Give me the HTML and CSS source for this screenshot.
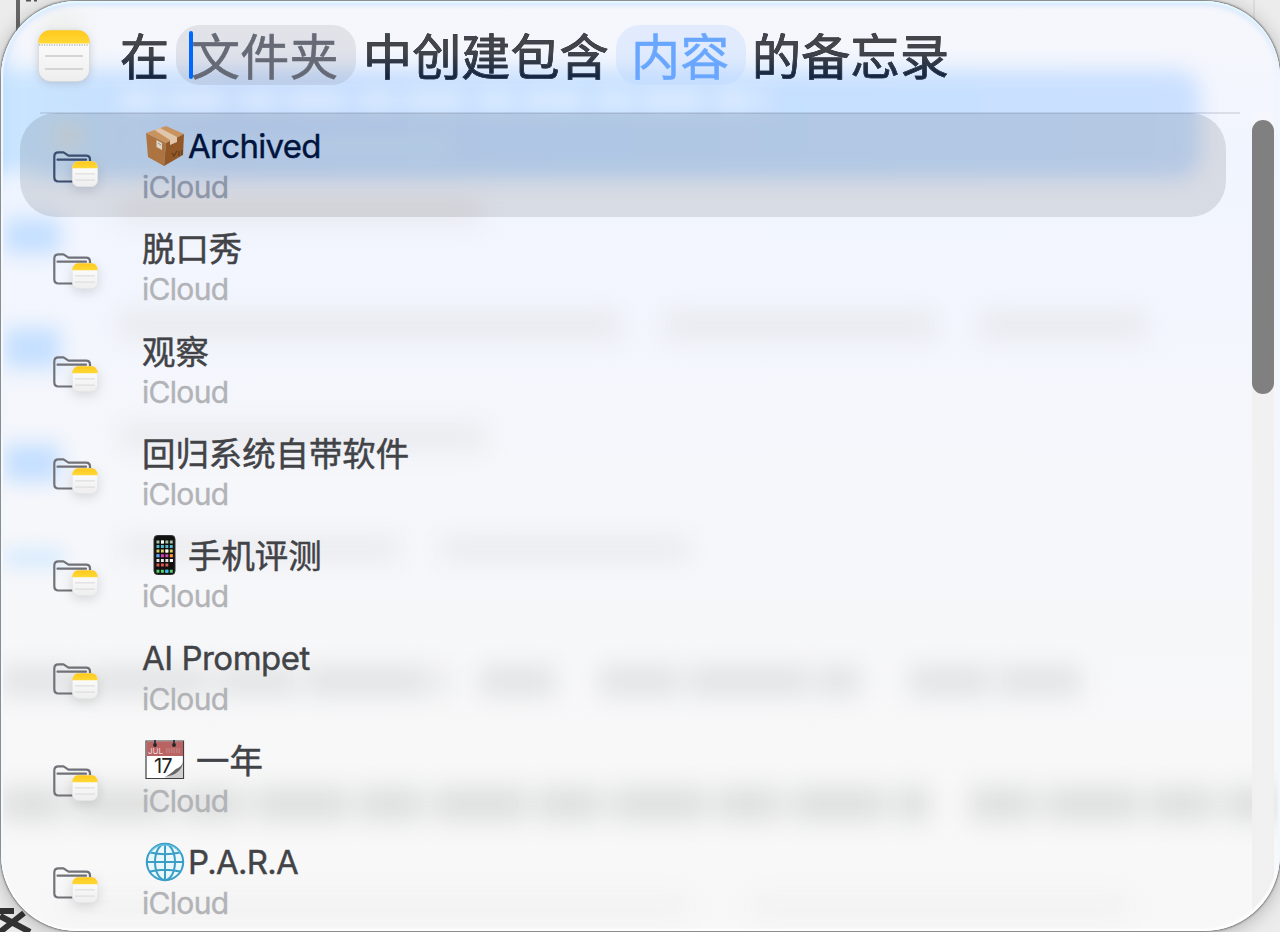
FILE: index.html
```html
<!DOCTYPE html>
<html lang="zh-CN">
<head>
<meta charset="utf-8">
<title>备忘录</title>
<link rel="stylesheet" href="styles.css">
</head>
<body>
<svg class="desktop" viewBox="0 0 1280 932" aria-hidden="true">
  <rect width="1280" height="932" fill="#ececec"/>
  <path d="M1254 0V40M18 0V30" stroke="#d0d0d0"/>
  <path d="M18 0V40" stroke="#666" stroke-width="4"/>
  <path d="M26 0h5M34 0h3" stroke="#555" stroke-width="3"/>
  <path d="M0 911H14M0 932L24 913M0 916L30 932" stroke="#333" stroke-width="6"/>
</svg>
<main class="panel">
  <svg class="backdrop" viewBox="0 0 1280 932" aria-hidden="true">
    <defs>
      <filter id="b1" x="-30%" y="-60%" width="160%" height="220%" color-interpolation-filters="sRGB"><feGaussianBlur stdDeviation="10"/></filter>
      <filter id="b2" x="-40%" y="-80%" width="180%" height="260%" color-interpolation-filters="sRGB"><feGaussianBlur stdDeviation="12"/></filter>
      <linearGradient id="band"><stop offset="0" stop-color="#cbe7ff"/><stop offset=".2" stop-color="#c3dafd"/><stop offset=".5" stop-color="#c4dfff"/><stop offset="1" stop-color="#cbe0ff"/></linearGradient>
    </defs>
    <g filter="url(#b1)">
      <rect x="-20" y="70" width="1220" height="108" rx="24" fill="url(#band)"/>
      <path d="M-10 8V180" stroke="#b9dcff" stroke-width="26"/>
      <ellipse cx="18" cy="186" rx="26" ry="16" fill="#eef4ff"/>
      <circle cx="68" cy="137" r="13" fill="#dadfe0"/>
      <path d="M120 100H770" stroke="#e2efff" stroke-width="16" stroke-dasharray="38 9 60 12"/>
      <path d="M130 147H450" stroke="#cbe5ff" stroke-width="14"/>
      <ellipse cx="62" cy="25" rx="22" ry="14" fill="#eeefed"/>
    </g>
    <g filter="url(#b1)" fill="#c4dfff">
      <rect x="4" y="218" width="56" height="36"/>
      <rect x="4" y="328" width="56" height="40"/>
      <rect x="4" y="444" width="56" height="38"/>
      <rect x="4" y="550" width="60" height="16" fill="#d0e8ff"/>
    </g>
    <g filter="url(#b2)" fill="none">
      <path d="M120 212H480" stroke="#e6e8ec" stroke-width="20"/>
      <path d="M120 325H620M665 325H935M980 325H1145" stroke="#e6e8ec" stroke-width="24"/>
      <path d="M120 437H485" stroke="#e9eaee" stroke-width="24"/>
      <path d="M120 549H400M440 549H690" stroke="#eaebee" stroke-width="24"/>
      <path d="M0 681H445M480 681H555M600 681H860M910 681H1080" stroke="#e2e3e4" stroke-width="30" stroke-dasharray="80 9 120 8"/>
      <path d="M0 804H930M970 804H1280" stroke="#dedfdf" stroke-width="34" stroke-dasharray="65 10 95 9"/>
      <path d="M60 907H690M750 907H1130" stroke="#f1f1f1" stroke-width="22"/>
    </g>
  </svg>

  <header class="query">
    <svg class="app-icon" viewBox="0 0 56 56" aria-hidden="true">
      <defs>
        <linearGradient id="paper" x2="0" y2="1"><stop offset="0" stop-color="#fff"/><stop offset="1" stop-color="#eeeeef"/></linearGradient>
        <linearGradient id="yellow" x2="0" y2="1"><stop offset="0" stop-color="#ffc91d"/><stop offset="1" stop-color="#ffd836"/></linearGradient>
        <symbol id="note" viewBox="0 0 26 26">
          <rect x=".3" y=".3" width="25.4" height="25.4" rx="6.4" fill="url(#paper)" stroke="#dedfe1" stroke-width=".6"/>
          <path d="M.3 7.3C.3 3 3 .3 7 .3H19C23 .3 25.7 3 25.7 7.3Z" fill="url(#yellow)"/>
          <path d="M3.5 12.8H22.5M3.5 19.2H22.5" stroke="#dedee0" stroke-width="1.3" stroke-linecap="round"/>
        </symbol>
        <symbol id="folder" viewBox="0 0 48 40">
          <path d="M20 32.5H6.5Q2.3 32.5 2.3 28.3V7.5Q2.3 3.3 6.5 3.3H11.5L16.5 6.600H34Q38 6.600 38 10.600V13M5.500 10.700H34" fill="none" stroke="currentColor" stroke-width="2.2" stroke-linecap="round" stroke-linejoin="round"/>
        </symbol>
      </defs>
      <rect x="2.3" y="2.3" width="51.4" height="51.4" rx="12.5" fill="url(#paper)" stroke="#c9ccd2" stroke-width=".7"/>
      <path d="M2.3 15.5C2.3 7 7 2.3 15 2.3H41C49 2.3 53.7 7 53.7 15.5Z" fill="url(#yellow)"/>
      <path d="M3 17H53" stroke="#b7b7b8" stroke-width="1.3" stroke-dasharray="1.2 1.3"/>
      <path d="M9 28H47M9 41H47" stroke="#d5d5d6" stroke-width="1.8"/>
    </svg>
    <div class="sentence">
      <span class="word first">在</span>
      <span class="token active"><span class="glyphs">文件夹</span><i class="caret"></i></span>
      <span class="word mid">中创建包含</span>
      <span class="token blue"><span class="glyphs">内容</span></span>
      <span class="word last">的备忘录</span>
    </div>
  </header>

  <ul class="results">
    <li class="row selected">
      <span class="icon"><svg class="folder"><use href="#folder"/></svg><svg class="note"><use href="#note"/></svg></span>
      <div class="text"><div class="title latin">
        <svg class="emoji" viewBox="0 0 40 42" aria-hidden="true">
          <path d="M1 8L21 1L39 9L21 18Z" fill="#c9935f"/><path d="M1 8L21 18L19 41L3 32Z" fill="#ad7442"/><path d="M21 18L39 9L38 30L19 41Z" fill="#925827"/>
          <path d="M9.5 5L15 3L32 12V17L25 20V15Z" fill="#e0c6ab"/><path d="M11.5 15L17 18V25L11.5 22Z" fill="#dcd5c8"/><path d="M13 18l3 2" stroke="#9a9288"/>
          <path d="M27 28l2 3 3-5M34 26v5M37 25v5" stroke="#68401c" stroke-width="1.3" fill="none"/>
        </svg><span class="name archived">Archived</span></div><div class="account">iCloud</div></div>
    </li>
    <li class="row">
      <span class="icon"><svg class="folder"><use href="#folder"/></svg><svg class="note"><use href="#note"/></svg></span>
      <div class="text"><div class="title"><span class="name">脱口秀</span></div><div class="account">iCloud</div></div>
    </li>
    <li class="row">
      <span class="icon"><svg class="folder"><use href="#folder"/></svg><svg class="note"><use href="#note"/></svg></span>
      <div class="text"><div class="title"><span class="name">观察</span></div><div class="account">iCloud</div></div>
    </li>
    <li class="row">
      <span class="icon"><svg class="folder"><use href="#folder"/></svg><svg class="note"><use href="#note"/></svg></span>
      <div class="text"><div class="title"><span class="name">回归系统自带软件</span></div><div class="account">iCloud</div></div>
    </li>
    <li class="row">
      <span class="icon"><svg class="folder"><use href="#folder"/></svg><svg class="note"><use href="#note"/></svg></span>
      <div class="text"><div class="title">
        <svg class="emoji" viewBox="0 0 40 42" aria-hidden="true">
          <rect x="9" y="1.5" width="21" height="39" rx="3.5" fill="#111" stroke="#343434"/>
          <g stroke-width="2.9" fill="none" stroke-dasharray="2.9 1.55">
            <path d="M11.5 8H28" stroke="#a8c6a4"/><path d="M11.5 12.5H28" stroke="#56bccd"/><path d="M11.5 17H28" stroke="#ddd164"/><path d="M11.5 21.7H28" stroke="#d743b2"/><path d="M11.5 26.5H28" stroke="#e8e8e8"/><path d="M11.5 31H24" stroke="#db594e"/><path d="M11.5 37.3H28" stroke="#50d672"/>
          </g>
          <path d="M16 8h2.900M24.900 26.500h2.900M20.400 17h2.900" stroke="#fff" stroke-width="2.9"/><path d="M11.500 21.700h2.900M20.400 37.300h2.900" stroke="#39b8ff" stroke-width="2.9"/><path d="M24.900 21.700h2.900" stroke="#ff9f12" stroke-width="2.9"/>
        </svg><span class="name">手机评测</span></div><div class="account">iCloud</div></div>
    </li>
    <li class="row">
      <span class="icon"><svg class="folder"><use href="#folder"/></svg><svg class="note"><use href="#note"/></svg></span>
      <div class="text"><div class="title latin"><span class="name prompet">AI Prompet</span></div><div class="account">iCloud</div></div>
    </li>
    <li class="row">
      <span class="icon"><svg class="folder"><use href="#folder"/></svg><svg class="note"><use href="#note"/></svg></span>
      <div class="text"><div class="title">
        <svg class="emoji" viewBox="0 0 40 42" aria-hidden="true">
          <path d="M1 3H38.5V40.5H1Z" fill="#fff" stroke="#3f3f3f" stroke-width="1.2"/><path d="M1.6 3.6H38V18H1.6Z" fill="#b96363"/>
          <path d="M10 7V2M29 7V2" stroke="#353f48" stroke-width="2"/><circle cx="10" cy="7" r="1.9" fill="#242424"/><circle cx="29" cy="7" r="1.9" fill="#242424"/>
          <path d="M21 12.5H36" stroke="#c27c7c" stroke-width="5" stroke-dasharray="1.5 1"/>
          <text x="3" y="16" class="month">JUL</text>
          <path d="M19 40C30 36 37 31 38 22V40Z" fill="#cfcfcf"/><path d="M20 39C29 34 29 32 31 31C36 29 38 26 38 23C38 31 32 37 20 39Z" fill="#666"/>
          <text x="9" y="35" class="day">17</text>
        </svg><span class="name year">一年</span></div><div class="account">iCloud</div></div>
    </li>
    <li class="row">
      <span class="icon"><svg class="folder"><use href="#folder"/></svg><svg class="note"><use href="#note"/></svg></span>
      <div class="text"><div class="title latin">
        <svg class="emoji" viewBox="0 0 40 42" aria-hidden="true">
          <circle cx="20" cy="21" r="18" fill="#e9f8fc"/>
          <g fill="none" stroke="#3a9ec7" stroke-width="2"><circle cx="20" cy="21" r="18.2"/><ellipse cx="20" cy="21" rx="10" ry="18"/><path d="M20 3V39M2 21H38M5 11.5Q20 15 35 11.5M5 30.5Q20 27 35 30.5"/></g>
          <path d="M5 12A18 18 0 0 1 35 12" fill="none" stroke="#69c4e1" stroke-width="1.2"/>
        </svg><span class="name para">P.A.R.A</span></div><div class="account">iCloud</div></div>
    </li>
  </ul>
  <div class="scroll"><div class="thumb"></div></div>
</main>
</body>
</html>
```

FILE: styles.css
```css
* { box-sizing: border-box; }
body { margin: 0; width: 1280px; height: 932px; overflow: hidden; position: relative; font-family: Inter, "Noto Sans CJK SC", sans-serif; }
.desktop { position: absolute; inset: 0; width: 1280px; height: 932px; }
.panel {
  position: relative; width: 1279px; height: 930px; margin: 1px 0 0 1px; overflow: hidden;
  border-radius: 76px; background: linear-gradient(#f6f7fb 0, #f1f5ff 150px, #f3f6fd 330px, #f6f7fb 480px, #f8f8f8 800px, #f8f8f8);
  box-shadow: 0 0 2px 1px #777, 0 3px 20px #0004;
}
.panel::after { content: ""; position: absolute; inset: 0; border-radius: 76px; pointer-events: none; box-shadow: inset 0 2px 1px #e3f9ff, inset 0 5px 4px #cce4ffb0, inset 2px 0 1px #fff, inset -2px -2px 2px #fff; }
.backdrop { position: absolute; left: -1px; top: -1px; width: 1280px; height: 932px; }
.query { position: relative; height: 113px; margin: 0 40px 0 39px; padding-top: 24px; display: flex; align-items: flex-start; border-bottom: 2px solid #00002018; }
.app-icon { width: 56px; height: 56px; margin: 3px 0 0 -4px; filter: drop-shadow(0 2px 4px #0002); }
.sentence { display: flex; align-items: center; height: 60px; margin-left: 27px; font: 49px/57px "Noto Sans CJK SC", sans-serif; white-space: nowrap; }
.word { height: 60px; -webkit-text-stroke: .7px #343b49; background: linear-gradient(#444548 45%, #132645 85%); background-clip: text; -webkit-text-fill-color: transparent; }
.first { width: 57px; margin-left: 1px; }
.mid { width: 253px; margin-left: 7px; letter-spacing: .15px; }
.token { position: relative; height: 60px; border-radius: 24px; padding: 0 15px; -webkit-text-stroke: .6px; letter-spacing: .3px; }
.active { width: 180px; background: #5a5a6820; color: #656a76; margin-left: -1px; }
.blue { width: 130px; background: #bad6ff55; color: #69a7ff; }
.last { margin-left: 6px; letter-spacing: .3px; }
.caret { position: absolute; left: 13px; top: 6px; width: 4px; height: 48px; border-radius: 2px; background: #0168ff; }
.results { position: relative; list-style: none; margin: -1px 0 0 19px; padding: 0; width: 1206px; }
.row { height: 102.3px; padding: 0 0 0 32px; display: flex; align-items: flex-start; color: #424347; }
.selected { height: 104px; margin-bottom: -1.7px; border-radius: 36px; background: #0000001b; color: #00143d; }
.icon { position: relative; width: 48px; height: 40px; margin-top: 36px; flex: none; color: #727378; }
.selected .icon { color: #3b4e70; }
.folder { width: 48px; height: 40px; display: block; }
.note { position: absolute; left: 20px; top: 12px; width: 26px; height: 26px; filter: drop-shadow(0 3px 6px #0002); overflow: visible; }
.text { margin-left: 42px; padding-top: 10px; }
.title { height: 46px; line-height: 44px; font-family: "Noto Sans CJK SC", sans-serif; font-size: 33.4px; display: flex; align-items: center; white-space: nowrap; -webkit-text-stroke: .5px; }
.name { height: 46px; }
.latin { font-family: Inter, sans-serif; font-size: 33px; line-height: 46px; letter-spacing: -.5px; -webkit-text-stroke: .4px; }
.archived { letter-spacing: -.7px; }
.para { letter-spacing: -.75px; }
.emoji { width: 40px; height: 42px; margin: -1px 3px 0 3px; flex: none; -webkit-text-stroke: 0; }
.year { margin-left: 8px; }
.account { height: 34px; line-height: 36px; font-size: 30px; letter-spacing: -.7px; -webkit-text-stroke: .4px; color: #b2b3b6; }
.selected .account { color: #8d96a8; }
.month { font: 8px Inter, sans-serif; fill: #f1dada; }
.day { font: 20px Inter, sans-serif; fill: #222; letter-spacing: -1px; }
.scroll { position: absolute; right: 6px; top: 112px; width: 22px; height: 811px; padding-top: 7px; background: linear-gradient(#f5f7fc 0, #f1f1f2 35%, #f0f0f0); }
.thumb { width: 22px; height: 274px; border-radius: 11px; background: #808080; }
```
